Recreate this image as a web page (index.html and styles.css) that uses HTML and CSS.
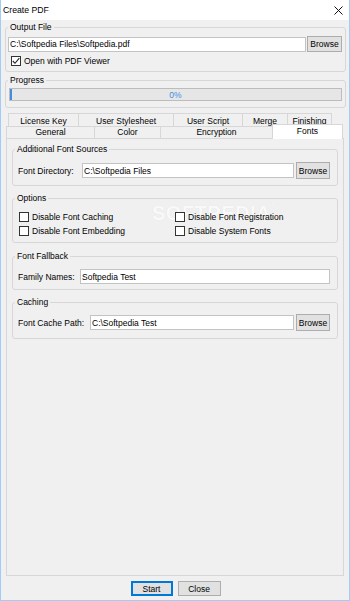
FILE: index.html
```html
<!DOCTYPE html>
<html>
<head>
    <meta charset="UTF-8">
    <title>Create PDF</title>
    <link rel="stylesheet" href="styles.css">
</head>
<body>
    <div class="window">
        <div class="titlebar">
            <span class="title">Create PDF</span>
            <svg class="close-icon" width="9" height="9" viewBox="0 0 9 9">
                <path d="M0.5 0.5 L8.5 8.5 M8.5 0.5 L0.5 8.5" stroke="#111" stroke-width="1" fill="none"/>
            </svg>
        </div>

        <!-- site watermark, sits behind the dialog controls -->
        <div class="watermark">SOFTPEDIA<sup>®</sup></div>

        <div class="client">
            <fieldset class="group output-group">
                <legend>Output File</legend>
                <div class="file-row">
                    <input type="text" class="textbox" value="C:\Softpedia Files\Softpedia.pdf">
                    <button class="btn browse">Browse</button>
                </div>
                <label class="check">
                    <span class="box">
                        <svg width="8" height="8" viewBox="0 0 8 8"><path d="M0.8 4 L3 6.3 L7.3 1.2" stroke="#222" stroke-width="1.1" fill="none"/></svg>
                    </span>
                    Open with PDF Viewer
                </label>
            </fieldset>

            <fieldset class="group progress-group">
                <legend>Progress</legend>
                <div class="progress">
                    <span class="progress-fill"></span>
                    <span class="progress-text">0%</span>
                </div>
            </fieldset>

            <div class="tabs">
                <div class="tab-row back">
                    <div class="tab" style="width: 71px">License Key</div>
                    <div class="tab" style="width: 96px">User Stylesheet</div>
                    <div class="tab" style="width: 70px">User Script</div>
                    <div class="tab" style="width: 46px">Merge</div>
                    <div class="tab" style="width: 45px">Finishing</div>
                </div>
                <div class="tab-row front">
                    <div class="tab" style="width: 89px">General</div>
                    <div class="tab" style="width: 67px">Color</div>
                    <div class="tab" style="width: 113px">Encryption</div>
                    <div class="tab active" style="width: 71px">Fonts</div>
                </div>

                <div class="panel">
                    <fieldset class="group inner sources">
                        <legend>Additional Font Sources</legend>
                        <div class="field-row">
                            <span class="field-label" style="width: 62px">Font Directory:</span>
                            <input type="text" class="textbox" value="C:\Softpedia Files">
                            <button class="btn browse">Browse</button>
                        </div>
                    </fieldset>

                    <fieldset class="group inner options">
                        <legend>Options</legend>
                        <div class="option-grid">
                            <label class="check"><span class="box"></span>Disable Font Caching</label>
                            <label class="check"><span class="box"></span>Disable Font Registration</label>
                            <label class="check"><span class="box"></span>Disable Font Embedding</label>
                            <label class="check"><span class="box"></span>Disable System Fonts</label>
                        </div>
                    </fieldset>

                    <fieldset class="group inner fallback">
                        <legend>Font Fallback</legend>
                        <div class="field-row">
                            <span class="field-label" style="width: 60px">Family Names:</span>
                            <input type="text" class="textbox" value="Softpedia Test">
                        </div>
                    </fieldset>

                    <fieldset class="group inner caching">
                        <legend>Caching</legend>
                        <div class="field-row">
                            <span class="field-label" style="width: 70px">Font Cache Path:</span>
                            <input type="text" class="textbox" value="C:\Softpedia Test">
                            <button class="btn browse">Browse</button>
                        </div>
                    </fieldset>
                </div>
            </div>

            <div class="footer">
                <button class="btn default" style="width: 42px">Start</button>
                <button class="btn" style="width: 43px">Close</button>
            </div>
        </div>
    </div>
</body>
</html>
```

FILE: styles.css
```css
:root {
    --window-border: #9fcdf5;
    --face: #f0f0f0;
    --line: #d7d7d7;
    --edit-border: #c3c3c3;
    --button-face: #e1e1e1;
    --button-border: #adadad;
    --accent: #0078d7;
}

* {
    box-sizing: border-box;
}

body {
    margin: 0;
    background: var(--face);
    font-family: 'Liberation Sans', Arial, sans-serif;
    font-size: 8.5px;
    color: #000;
}

.window {
    position: relative;
    width: 350px;
    height: 601px;
    border: 1px solid var(--window-border);
    border-top: none;
    background: var(--face);
    overflow: hidden;
}

.titlebar {
    height: 20px;
    background: #fff;
    display: flex;
    align-items: center;
    justify-content: space-between;
    padding: 0 6px 0 2px;
}

.title {
    font-size: 8.7px;
}

.client {
    position: relative;
    height: 580px;
    display: flex;
    flex-direction: column;
    padding: 2px 3px 0 4px;
}

/* group boxes */
.group {
    margin: 0;
    min-width: 0;
    border: 1px solid var(--line);
    border-radius: 3px;
}

.group legend {
    padding: 0 2px;
    line-height: 10px;
}

.output-group {
    padding: 4px 3px 4px 2px;
}

.output-group legend {
    margin-left: 0;
}

.progress-group {
    margin-top: 3px;
    padding: 3px 3px 6px 3px;
}

.progress-group legend {
    margin-left: -1px;
}

.inner {
    padding: 7px 7px 6px 5px;
}

.inner legend {
    margin-left: -3px;
}

.sources {
    padding-top: 8px;
}

.options {
    margin-top: 7px;
    padding-bottom: 4px;
}

.fallback {
    margin-top: 8px;
    padding-bottom: 4px;
}

.caching {
    margin-top: 7px;
    padding-bottom: 7px;
}

/* inputs */
.file-row,
.field-row {
    display: flex;
    align-items: center;
}

.file-row {
    height: 16px;
    gap: 1px;
}

.field-row {
    height: 17px;
    gap: 2px;
}

.field-label {
    flex: none;
}

.textbox {
    flex: 1;
    min-width: 0;
    height: 15px;
    margin: 0;
    padding: 0 1px;
    border: 1px solid var(--edit-border);
    background: #fff;
    font: inherit;
    color: #000;
    outline: none;
}

.btn {
    height: 16px;
    margin: 0;
    padding: 0;
    border: 1px solid var(--button-border);
    background: var(--button-face);
    font: inherit;
    color: #000;
}

.browse {
    flex: none;
    width: 35px;
}

.field-row .browse {
    width: 34px;
    height: 17px;
}

.btn.default {
    border: 1px solid var(--accent);
    box-shadow: inset 0 0 0 1px var(--accent);
}

/* check boxes */
.check {
    display: flex;
    align-items: center;
    gap: 3px;
    height: 13px;
    margin-top: 2px;
    padding-left: 3px;
}

.box {
    width: 10px;
    height: 10px;
    flex: none;
    border: 1px solid #333;
    background: #fff;
    display: flex;
    align-items: center;
    justify-content: center;
}

.option-grid {
    display: grid;
    grid-template-columns: 156px 1fr;
    margin-left: 1px;
}

.option-grid .check {
    height: 14px;
    margin: 0;
    padding: 0;
}

/* progress bar */
.progress {
    position: relative;
    height: 13px;
    border: 1px solid #bcbcbc;
    background: #e6e6e6;
    display: flex;
    align-items: center;
    justify-content: center;
}

.progress-fill {
    position: absolute;
    left: 0;
    top: 0;
    bottom: 0;
    width: 2px;
    background: #3f8fe0;
}

.progress-text {
    color: #3f8fe0;
}

/* tabs */
.tabs {
    flex: 1;
    display: flex;
    flex-direction: column;
    margin: 5px 2px 0 1px;
}

.tab-row {
    display: flex;
    align-items: flex-end;
}

.tab-row.back {
    height: 13px;
    padding-left: 2px;
}

.tab-row.front {
    height: 12px;
}

.tab {
    height: 100%;
    margin-left: -1px;
    border: 1px solid var(--line);
    border-bottom: none;
    background: var(--face);
    text-align: center;
    line-height: 11px;
}

.tab:first-child {
    margin-left: 0;
}

.back .tab {
    line-height: 12px;
    padding-top: 1px;
}

.tab.active {
    position: relative;
    z-index: 1;
    height: 15px;
    margin-bottom: -1px;
    background: #fff;
    line-height: 13px;
}

.panel {
    flex: 1;
    border: 1px solid var(--line);
    padding: 5px 5px 0 5px;
}

.footer {
    height: 24px;
    flex: none;
    display: flex;
    justify-content: center;
    gap: 5px;
    padding-top: 5px;
}

.footer .btn {
    height: 15px;
}

/* faint site watermark behind the options box */
.watermark {
    position: absolute;
    left: 151px;
    top: 202px;
    font-size: 20px;
    font-weight: bold;
    letter-spacing: 0.5px;
    color: #f9f9f9;
    text-shadow: 0 0 1px rgba(0, 0, 0, 0.08);
    pointer-events: none;
}

.watermark sup {
    font-size: 7px;
    vertical-align: top;
}
```
